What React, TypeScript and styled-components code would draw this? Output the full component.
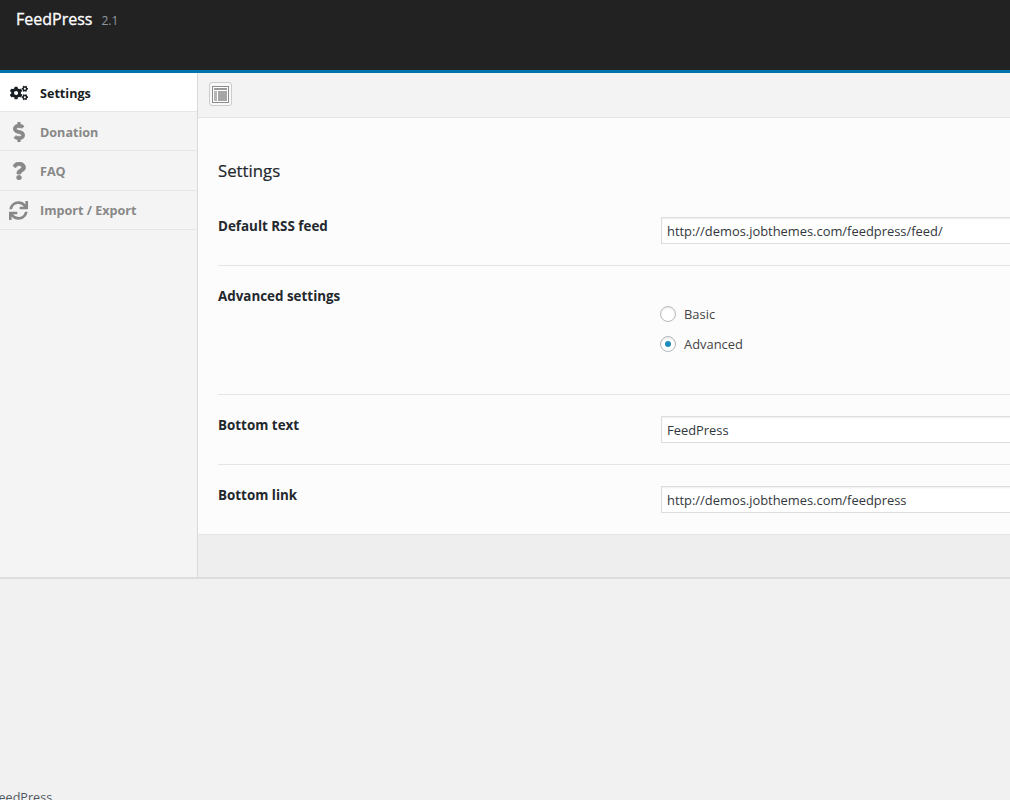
import React from "react";
import styled, { createGlobalStyle } from "styled-components";
import { FaCogs, FaDollarSign, FaQuestion, FaSync } from "react-icons/fa";

const GlobalStyle = createGlobalStyle`
  html, body {
    margin: 0;
    padding: 0;
    height: 100%;
    overflow: hidden;
    background: #f1f1f1;
    font-family: "Open Sans", "Liberation Sans", sans-serif;
    font-size: 13px;
    color: #32373c;
  }
`;

const Page = styled.div`
  width: 1010px;
  height: 800px;
  display: flex;
  flex-direction: column;
  overflow: hidden;
`;

const Banner = styled.header`
  height: 70px;
  flex: none;
  box-sizing: content-box;
  background: #222222;
  border-bottom: 3px solid #0073aa;
  display: flex;
  align-items: baseline;
  padding-left: 16px;
  gap: 9px;
`;

const Brand = styled.span`
  color: #ffffff;
  font-size: 16px;
  line-height: 38px;
  font-weight: 400;
  -webkit-text-stroke: 0.3px #fff;
`;

const Version = styled.span`
  color: #8f99a3;
  font-size: 12px;
`;

const Panel = styled.div`
  display: flex;
  height: 504px;
  flex: none;
  border-bottom: 2px solid #dddddd;
  box-sizing: content-box;
`;

const Sidebar = styled.nav`
  width: 198px;
  box-sizing: border-box;
  flex: none;
  background: #f4f4f4;
  border-right: 1px solid #d9d9d9;
`;

const NavItem = styled.div<{ $active?: boolean; $height: number; $pad: number }>`
  height: ${(p) => p.$height}px;
  box-sizing: border-box;
  display: flex;
  align-items: center;
  padding-top: ${(p) => p.$pad}px;
  background: ${(p) => (p.$active ? "#ffffff" : "transparent")};
  color: ${(p) => (p.$active ? "#191e23" : "#888888")};
  border-bottom: 1px solid #e6e6e6;
  font-weight: 700;
  font-size: 12.6px;
`;

const NavIcon = styled.span<{ $size: number; $heavy?: boolean }>`
  width: 40px;
  flex: none;
  display: flex;
  justify-content: center;
  padding-right: 3px;
  box-sizing: border-box;
  font-size: ${(p) => p.$size}px;

  svg {
    stroke: currentColor;
    stroke-width: ${(p) => (p.$heavy ? 18 : 0)}px;
  }
`;

const Main = styled.main`
  flex: 1;
  min-width: 0;
  display: flex;
  flex-direction: column;
  background: #eeeeee;
`;

const Toolbar = styled.div`
  height: 45px;
  flex: none;
  box-sizing: border-box;
  background: #f3f3f3;
  border-bottom: 1px solid #e2e2e2;
  display: flex;
  align-items: center;
  padding: 0 0 2px 11px;
`;

const LayoutButton = styled.button`
  width: 23px;
  height: 24px;
  padding: 0;
  background: #f8f8f8;
  border: 1px solid #cccccc;
  border-radius: 3px;
  display: flex;
  align-items: center;
  justify-content: center;
`;

const Content = styled.section`
  height: 417px;
  flex: none;
  box-sizing: border-box;
  background: #fcfcfc;
  border-bottom: 1px solid #e5e5e5;
  padding: 0 0 0 20px;
`;

const Heading = styled.h2`
  margin: 0;
  padding-top: 42px;
  height: 89px;
  box-sizing: border-box;
  font-size: 16.8px;
  line-height: 22px;
  font-weight: 400;
  color: #23282d;
  -webkit-text-stroke: 0.2px #23282d;
`;

const Row = styled.div<{ $height: number; $first?: boolean; $last?: boolean }>`
  height: ${(p) => p.$height}px;
  box-sizing: border-box;
  padding-top: ${(p) => (p.$first ? 10 : 21)}px;
  display: flex;
  border-bottom: ${(p) => (p.$last ? "none" : "1px solid #e5e5e5")};
`;

const Label = styled.div`
  width: 443px;
  flex: none;
  font-weight: 700;
  font-size: 13.4px;
  line-height: 18px;
  color: #23282d;
`;

const Field = styled.input`
  width: 500px;
  height: 27px;
  flex: none;
  box-sizing: border-box;
  padding: 0 5px;
  border: 1px solid #dddddd;
  box-shadow: inset 0 1px 2px rgba(0, 0, 0, 0.07);
  background: #ffffff;
  color: #32373c;
  font-family: inherit;
  font-size: 12.9px;
  outline: none;
`;

const Radios = styled.div`
  display: flex;
  flex-direction: column;
  gap: 12px;
  padding-top: 18px;
  margin-left: -1px;
`;

const RadioRow = styled.label`
  display: flex;
  align-items: center;
  gap: 8px;
  height: 18px;
  font-size: 12.9px;
  color: #444444;
`;

const RadioDot = styled.span<{ $checked?: boolean }>`
  width: 16px;
  height: 16px;
  box-sizing: border-box;
  border-radius: 50%;
  border: 1px solid #b4b9be;
  background: #ffffff;
  box-shadow: inset 0 1px 2px rgba(0, 0, 0, 0.1);
  display: flex;
  align-items: center;
  justify-content: center;

  &::after {
    content: "";
    display: ${(p) => (p.$checked ? "block" : "none")};
    width: 6px;
    height: 6px;
    border-radius: 50%;
    background: #1e8cbe;
  }
`;

const Spacer = styled.div`
  flex: 1;
`;

const Footer = styled.footer`
  flex: none;
  height: 11px;
  margin-left: -8px;
  font-size: 12.6px;
  line-height: 18px;
  color: #50575e;
`;

const LayoutIcon = () => (
  <svg width="17" height="17" viewBox="0 0 17 17">
    <rect x="0.5" y="0.5" width="16" height="16" fill="#fff" stroke="#8c8c8c" />
    <rect x="2" y="2" width="13" height="2" fill="#9a9a9a" />
    <rect x="2" y="5" width="3" height="10" fill="#b5b5b5" />
    <rect x="6" y="5" width="9" height="10" fill="#a6a6a6" />
  </svg>
);

const navItems = [
  { label: "Settings", icon: <FaCogs />, size: 18, height: 39, pad: 2, active: true },
  { label: "Donation", icon: <FaDollarSign />, size: 20, height: 39, pad: 2, heavy: true },
  { label: "FAQ", icon: <FaQuestion />, size: 18, height: 40, pad: 1, heavy: true },
  { label: "Import / Export", icon: <FaSync />, size: 19, height: 39, pad: 1 },
];

const App: React.FC = () => {
  return (
    <Page>
      <GlobalStyle />
      <Banner>
        <Brand>FeedPress</Brand>
        <Version>2.1</Version>
      </Banner>
      <Panel>
        <Sidebar>
          {navItems.map((item) => (
            <NavItem key={item.label} $active={item.active} $height={item.height} $pad={item.pad}>
              <NavIcon $size={item.size} $heavy={item.heavy}>
                {item.icon}
              </NavIcon>
              {item.label}
            </NavItem>
          ))}
        </Sidebar>
        <Main>
          <Toolbar>
            <LayoutButton>
              <LayoutIcon />
            </LayoutButton>
          </Toolbar>
          <Content>
            <Heading>Settings</Heading>
            <Row $height={59} $first>
              <Label>Default RSS feed</Label>
              <Field readOnly value="http://demos.jobthemes.com/feedpress/feed/" />
            </Row>
            <Row $height={129}>
              <Label>Advanced settings</Label>
              <Radios>
                <RadioRow>
                  <RadioDot />
                  Basic
                </RadioRow>
                <RadioRow>
                  <RadioDot $checked />
                  Advanced
                </RadioRow>
              </Radios>
            </Row>
            <Row $height={70}>
              <Label>Bottom text</Label>
              <Field readOnly value="FeedPress" />
            </Row>
            <Row $height={70} $last>
              <Label>Bottom link</Label>
              <Field readOnly value="http://demos.jobthemes.com/feedpress" />
            </Row>
          </Content>
        </Main>
      </Panel>
      <Spacer />
      <Footer>FeedPress</Footer>
    </Page>
  );
};

export default App;
